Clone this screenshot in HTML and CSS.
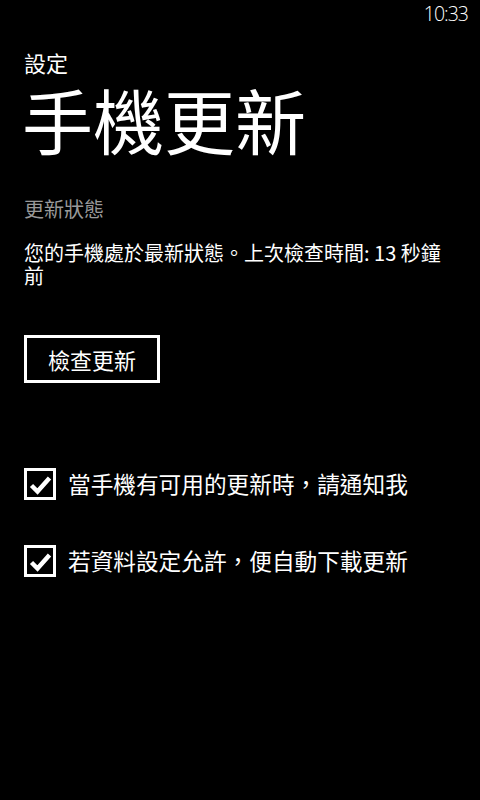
FILE: index.html
```html
<!DOCTYPE html>
<html lang="zh-Hant">
<head>
<meta charset="utf-8">
<title>手機更新</title>
<link rel="stylesheet" href="styles.css">
</head>
<body>
<div class="screen">
  <div class="status-bar"><span class="time">10:33</span></div>
  <header class="header">
    <div class="app-title">設定</div>
    <h1 class="page-title">手機更新</h1>
  </header>
  <main class="content">
    <div class="section-label">更新狀態</div>
    <p class="status-text">您的手機處於最新狀態。上次檢查時間: 13 秒鐘前</p>
    <button class="btn" type="button">檢查更新</button>
    <div class="options">
      <label class="check">
        <span class="box"><svg viewBox="0 0 32 32" width="32" height="32"><path d="M7.5 17.5 L13.5 23.5 L25.5 10" fill="none" stroke="#fff" stroke-width="4.5"/></svg></span>
        <span class="check-label">當手機有可用的更新時，請通知我</span>
      </label>
      <label class="check">
        <span class="box"><svg viewBox="0 0 32 32" width="32" height="32"><path d="M7.5 17.5 L13.5 23.5 L25.5 10" fill="none" stroke="#fff" stroke-width="4.5"/></svg></span>
        <span class="check-label">若資料設定允許，便自動下載更新</span>
      </label>
    </div>
  </main>
</div>
</body>
</html>
```
FILE: styles.css
```css
html, body {
  margin: 0;
  padding: 0;
  background: #000;
}
body {
  color: #fff;
  font-family: "Noto Sans CJK TC", "Noto Sans CJK SC", sans-serif;
}
.screen {
  width: 480px;
  height: 800px;
  overflow: hidden;
}
.status-bar {
  display: flex;
  justify-content: flex-end;
  height: 32px;
  padding: 4px 12px 0 0;
  box-sizing: border-box;
}
.time {
  font-family: "Open Sans", "Noto Sans", sans-serif;
  font-weight: 300;
  font-size: 19.5px;
  letter-spacing: -1px;
  line-height: 20px;
  color: #fff;
}
.header {
  padding: 0 24px;
}
.app-title {
  margin-top: 18px;
  font-size: 22px;
  line-height: 24px;
}
.page-title {
  margin: 13px 0 0 -2px;
  font-family: "Liberation Sans", "Noto Sans CJK TC", sans-serif;
  font-weight: 400;
  font-size: 71px;
  line-height: 76px;
}
.content {
  padding: 0 36px 0 24px;
}
.section-label {
  margin-top: 35px;
  font-size: 20px;
  line-height: 22px;
  color: #999;
}
.status-text {
  margin: 21px 0 0;
  font-size: 20px;
  line-height: 23px;
}
.btn {
  display: block;
  margin-top: 48px;
  width: 136px;
  height: 48px;
  padding: 0;
  border: 3px solid #fff;
  background: #000;
  color: #fff;
  font-family: inherit;
  font-size: 22px;
  line-height: 24px;
}
.options {
  display: flex;
  flex-direction: column;
  gap: 45px;
  margin-top: 85px;
}
.check {
  display: flex;
  align-items: center;
  gap: 12px;
}
.box {
  position: relative;
  width: 32px;
  height: 32px;
  box-sizing: border-box;
  border: 3px solid #fff;
  flex: none;
}
.box svg {
  position: absolute;
  left: -3px;
  top: -3px;
}
.check-label {
  font-size: 22.67px;
  line-height: 26px;
  white-space: nowrap;
}
```
